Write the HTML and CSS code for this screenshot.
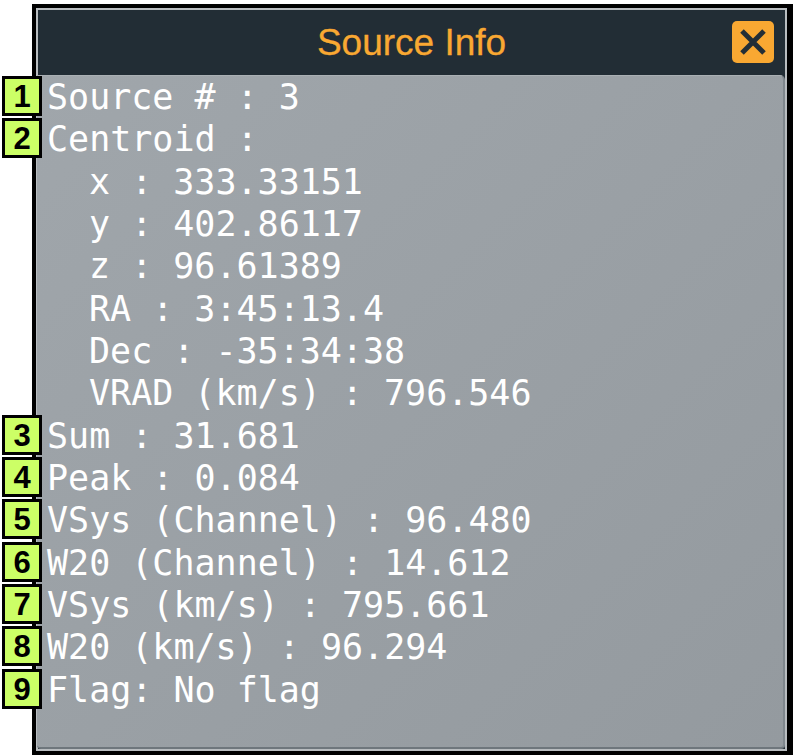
FILE: index.html
```html
<!DOCTYPE html>
<html>
<head>
<meta charset="utf-8">
<link rel="stylesheet" href="styles.css">
</head>
<body>
<div class="window">
  <div class="frame">
    <div class="titlebar">
      <span class="title">Source Info</span>
      <button class="close" aria-label="Close">
        <svg width="26" height="26" viewBox="0 0 26 26"><path d="M2 2 L24 24 M24 2 L2 24" stroke="#232e36" stroke-width="5" fill="none"/></svg>
      </button>
    </div>
    <div class="content">
      <div class="row"><span class="badge">1</span>Source # : 3</div>
      <div class="row"><span class="badge">2</span>Centroid :</div>
      <div class="row sub">x : 333.33151</div>
      <div class="row sub">y : 402.86117</div>
      <div class="row sub">z : 96.61389</div>
      <div class="row sub">RA : 3:45:13.4</div>
      <div class="row sub">Dec : -35:34:38</div>
      <div class="row sub">VRAD (km/s) : 796.546</div>
      <div class="row"><span class="badge">3</span>Sum : 31.681</div>
      <div class="row"><span class="badge">4</span>Peak : 0.084</div>
      <div class="row"><span class="badge">5</span>VSys (Channel) : 96.480</div>
      <div class="row"><span class="badge">6</span>W20 (Channel) : 14.612</div>
      <div class="row"><span class="badge">7</span>VSys (km/s) : 795.661</div>
      <div class="row"><span class="badge">8</span>W20 (km/s) : 96.294</div>
      <div class="row"><span class="badge">9</span>Flag: No flag</div>
    </div>
  </div>
</div>
</body>
</html>
```
FILE: styles.css
```css
html, body {
  margin: 0;
  padding: 0;
  background: #ffffff;
}
.window {
  margin: 4px 0 0 32px;
  width: 751px;
  height: 743px;
  border-style: solid;
  border-color: #000;
  border-width: 4px 6px 4px 4px;
  background: #000;
}
.frame {
  box-sizing: border-box;
  height: 100%;
  border: 2px solid #b9bdc0;
  background: #232e36;
  display: flex;
  flex-direction: column;
}
.titlebar {
  position: relative;
  height: 65px;
  flex: none;
  display: flex;
  align-items: center;
  justify-content: center;
  background: #222d35;
}
.title {
  font-family: "Liberation Sans", Arial, sans-serif;
  font-size: 37px;
  color: #f9a832;
  margin-top: 0;
  -webkit-text-stroke: 0.3px #f9a832;
}
.close {
  position: absolute;
  right: 11px;
  top: 11px;
  width: 42px;
  height: 42px;
  border: none;
  border-radius: 5px;
  background: #f9a832;
  padding: 0;
  display: flex;
  align-items: center;
  justify-content: center;
}
.content {
  flex: 1;
  margin-left: -1px;
  border-top: 1px solid #aab0b4;
  border-right: 2px solid #7f878d;
  border-bottom: 2px solid #6e767c;
  border-radius: 0 5px 4px 4px;
  background: linear-gradient(135deg, #a0a6ab 0%, #9aa0a5 50%, #949a9f 100%);
  padding: 0 0 0 10px;
  font-family: "DejaVu Sans Mono", monospace;
  font-size: 35px;
  line-height: 42.35px;
  color: #ffffff;
}
.row {
  position: relative;
  white-space: pre;
}
.row.sub {
  padding-left: 42px;
}
.badge {
  position: absolute;
  left: -45px;
  top: 0;
  box-sizing: border-box;
  width: 40px;
  height: 40px;
  border: 3px solid #000;
  background: #ccff66;
  color: #000;
  font-family: "Liberation Sans", Arial, sans-serif;
  font-weight: bold;
  font-size: 31px;
  line-height: 35px;
  text-align: center;
}
```
